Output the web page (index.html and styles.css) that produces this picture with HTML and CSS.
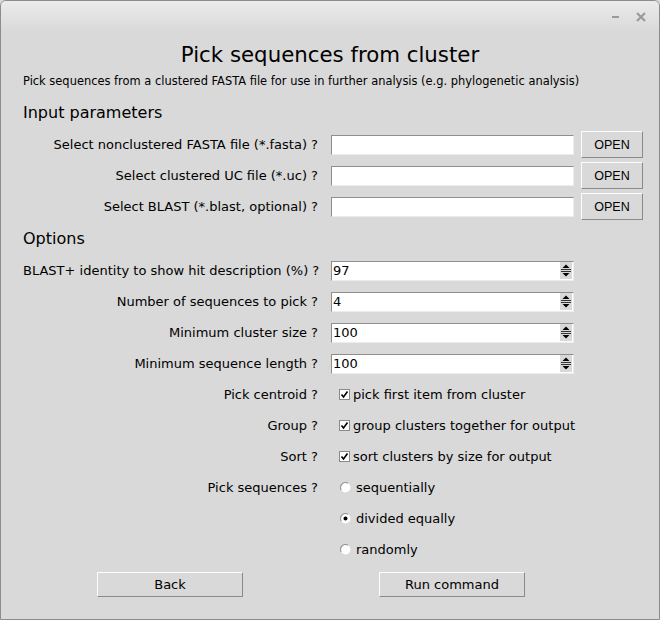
FILE: index.html
```html
<!DOCTYPE html>
<html>
<head>
<meta charset="utf-8">
<link rel="stylesheet" href="styles.css">
</head>
<body>
<div class="window">
  <div class="titlebar">
    <span class="min"></span>
    <svg class="close" width="10" height="10" viewBox="0 0 10 10"><path d="M1 1L9 9M9 1L1 9" stroke="#9a9a9a" stroke-width="2.2" stroke-linecap="butt"/></svg>
  </div>
  <div class="content">
    <h1 class="title">Pick sequences from cluster</h1>
    <p class="subtitle">Pick sequences from a clustered FASTA file for use in further analysis (e.g. phylogenetic analysis)</p>

    <h2 class="section">Input parameters</h2>
    <div class="grid">
      <div class="label">Select nonclustered FASTA file (*.fasta) ?</div>
      <div class="field"><div class="entry"></div></div>
      <div class="btncell"><button class="btn open">OPEN</button></div>

      <div class="label">Select clustered UC file (*.uc) ?</div>
      <div class="field"><div class="entry"></div></div>
      <div class="btncell"><button class="btn open">OPEN</button></div>

      <div class="label">Select BLAST (*.blast, optional) ?</div>
      <div class="field"><div class="entry"></div></div>
      <div class="btncell"><button class="btn open">OPEN</button></div>
    </div>

    <h2 class="section options">Options</h2>
    <div class="grid">
      <div class="label">BLAST+ identity to show hit description (%) ?</div>
      <div class="field"><div class="entry spin"><span class="val">97</span><svg class="arrows" width="12" height="17" viewBox="0 0 12 17"><rect x="0" y="0" width="12" height="17" fill="#d9d9d9"/><path d="M2.5 6L6 2.5L9.5 6Z" fill="#000"/><rect x="1" y="7" width="10" height="1" fill="#333"/><rect x="1" y="9" width="10" height="1" fill="#333"/><path d="M2.5 11L9.5 11L6 14.5Z" fill="#000"/></svg></div></div>
      <div></div>

      <div class="label">Number of sequences to pick ?</div>
      <div class="field"><div class="entry spin"><span class="val">4</span><svg class="arrows" width="12" height="17" viewBox="0 0 12 17"><rect x="0" y="0" width="12" height="17" fill="#d9d9d9"/><path d="M2.5 6L6 2.5L9.5 6Z" fill="#000"/><rect x="1" y="7" width="10" height="1" fill="#333"/><rect x="1" y="9" width="10" height="1" fill="#333"/><path d="M2.5 11L9.5 11L6 14.5Z" fill="#000"/></svg></div></div>
      <div></div>

      <div class="label">Minimum cluster size ?</div>
      <div class="field"><div class="entry spin"><span class="val">100</span><svg class="arrows" width="12" height="17" viewBox="0 0 12 17"><rect x="0" y="0" width="12" height="17" fill="#d9d9d9"/><path d="M2.5 6L6 2.5L9.5 6Z" fill="#000"/><rect x="1" y="7" width="10" height="1" fill="#333"/><rect x="1" y="9" width="10" height="1" fill="#333"/><path d="M2.5 11L9.5 11L6 14.5Z" fill="#000"/></svg></div></div>
      <div></div>

      <div class="label">Minimum sequence length ?</div>
      <div class="field"><div class="entry spin"><span class="val">100</span><svg class="arrows" width="12" height="17" viewBox="0 0 12 17"><rect x="0" y="0" width="12" height="17" fill="#d9d9d9"/><path d="M2.5 6L6 2.5L9.5 6Z" fill="#000"/><rect x="1" y="7" width="10" height="1" fill="#333"/><rect x="1" y="9" width="10" height="1" fill="#333"/><path d="M2.5 11L9.5 11L6 14.5Z" fill="#000"/></svg></div></div>
      <div></div>

      <div class="label">Pick centroid ?</div>
      <div class="field"><span class="check"><svg width="11" height="11" viewBox="0 0 11 11"><rect x="0.5" y="0.5" width="10" height="10" fill="#fff" stroke="#8a8a8a"/><path d="M2.5 5.5L4.5 8L8.5 2.5" fill="none" stroke="#000" stroke-width="1.6"/></svg></span><span class="opt">pick first item from cluster</span></div>
      <div></div>

      <div class="label">Group ?</div>
      <div class="field"><span class="check"><svg width="11" height="11" viewBox="0 0 11 11"><rect x="0.5" y="0.5" width="10" height="10" fill="#fff" stroke="#8a8a8a"/><path d="M2.5 5.5L4.5 8L8.5 2.5" fill="none" stroke="#000" stroke-width="1.6"/></svg></span><span class="opt">group clusters together for output</span></div>
      <div></div>

      <div class="label">Sort ?</div>
      <div class="field"><span class="check"><svg width="11" height="11" viewBox="0 0 11 11"><rect x="0.5" y="0.5" width="10" height="10" fill="#fff" stroke="#8a8a8a"/><path d="M2.5 5.5L4.5 8L8.5 2.5" fill="none" stroke="#000" stroke-width="1.6"/></svg></span><span class="opt">sort clusters by size for output</span></div>
      <div></div>

      <div class="label">Pick sequences ?</div>
      <div class="field"><span class="radio"><svg width="11" height="11" viewBox="0 0 11 11"><circle cx="5.5" cy="5.5" r="5" fill="#fff"/><path d="M1.2 8A5 5 0 0 1 8 1.2" fill="none" stroke="#9a9a9a" stroke-width="1.2"/></svg></span><span class="opt">sequentially</span></div>
      <div></div>

      <div class="label"></div>
      <div class="field"><span class="radio"><svg width="11" height="11" viewBox="0 0 11 11"><circle cx="5.5" cy="5.5" r="5" fill="#fff"/><path d="M1.2 8A5 5 0 0 1 8 1.2" fill="none" stroke="#9a9a9a" stroke-width="1.2"/><circle cx="5.5" cy="5.5" r="2" fill="#000"/></svg></span><span class="opt">divided equally</span></div>
      <div></div>

      <div class="label"></div>
      <div class="field"><span class="radio"><svg width="11" height="11" viewBox="0 0 11 11"><circle cx="5.5" cy="5.5" r="5" fill="#fff"/><path d="M1.2 8A5 5 0 0 1 8 1.2" fill="none" stroke="#9a9a9a" stroke-width="1.2"/></svg></span><span class="opt">randomly</span></div>
      <div></div>
    </div>

    <div class="actions">
      <button class="btn wide">Back</button>
      <button class="btn wide">Run command</button>
    </div>
  </div>
</div>
</body>
</html>
```

FILE: styles.css
```css
html, body {
  margin: 0;
  padding: 0;
  background: #d9d9d9;
}
.window {
  box-sizing: border-box;
  width: 660px;
  height: 620px;
  border: 1px solid #8c8c8c;
  border-radius: 6px 6px 0 0;
  background: #d9d9d9;
  overflow: hidden;
  font-family: "DejaVu Sans", sans-serif;
  color: #000;
}
.titlebar {
  height: 31px;
  background: linear-gradient(#ebebeb, #d9d9d9);
  display: flex;
  align-items: center;
  justify-content: flex-end;
  padding-right: 13px;
  gap: 17px;
}
.min {
  display: block;
  width: 7px;
  height: 2px;
  background: #9a9a9a;
}
.close {
  display: block;
}
.content {
  padding-top: 7px;
}
.title {
  margin: 0;
  height: 32px;
  line-height: 32px;
  text-align: center;
  font-size: 21.3px;
  font-weight: normal;
}
.subtitle {
  margin: 0;
  height: 20px;
  line-height: 20px;
  padding-left: 22px;
  font-size: 11.45px;
  white-space: nowrap;
}
.section {
  margin: 6px 0 0 0;
  height: 32px;
  line-height: 32px;
  padding-left: 22px;
  font-size: 16px;
  font-weight: normal;
}
.section.options {
  margin-top: 1px;
}
.grid {
  display: grid;
  grid-template-columns: 308px 250px 62px;
  grid-auto-rows: 31px;
  align-items: center;
  padding-left: 22px;
  font-size: 13px;
}
.label {
  text-align: right;
  padding-right: 13px;
  white-space: nowrap;
}
.field {
  display: flex;
  align-items: center;
}
.entry {
  box-sizing: border-box;
  width: 243px;
  height: 20px;
  background: #fff;
  border-top: 1px solid #8e8e8e;
  border-left: 1px solid #8e8e8e;
  border-bottom: 1px solid #ececec;
  border-right: 1px solid #ececec;
}
.spin {
  display: flex;
  align-items: center;
  justify-content: space-between;
  padding: 0 1px 0 1px;
}
.val {
  line-height: 18px;
}
.arrows {
  display: block;
}
.btncell {
  display: flex;
  align-items: center;
}
.btn {
  box-sizing: border-box;
  background: #d9d9d9;
  border-top: 1px solid #fdfdfd;
  border-left: 1px solid #fdfdfd;
  border-bottom: 1px solid #8a8a8a;
  border-right: 1px solid #8a8a8a;
  border-radius: 0;
  padding: 0;
  margin: 0;
  color: #000;
}
.open {
  width: 62px;
  height: 27px;
  font-family: "Liberation Sans", Arial, sans-serif;
  font-size: 12.5px;
}
.check {
  display: flex;
  margin-left: 8px;
  margin-right: 3px;
}
.radio {
  display: flex;
  margin-left: 9px;
  margin-right: 5px;
}
.check svg, .radio svg {
  display: block;
}
.opt {
  white-space: nowrap;
}
.actions {
  display: flex;
  gap: 136px;
  padding-left: 96px;
  margin-top: 7px;
}
.wide {
  width: 146px;
  height: 25px;
  font-family: "DejaVu Sans", sans-serif;
  font-size: 13px;
}
```
